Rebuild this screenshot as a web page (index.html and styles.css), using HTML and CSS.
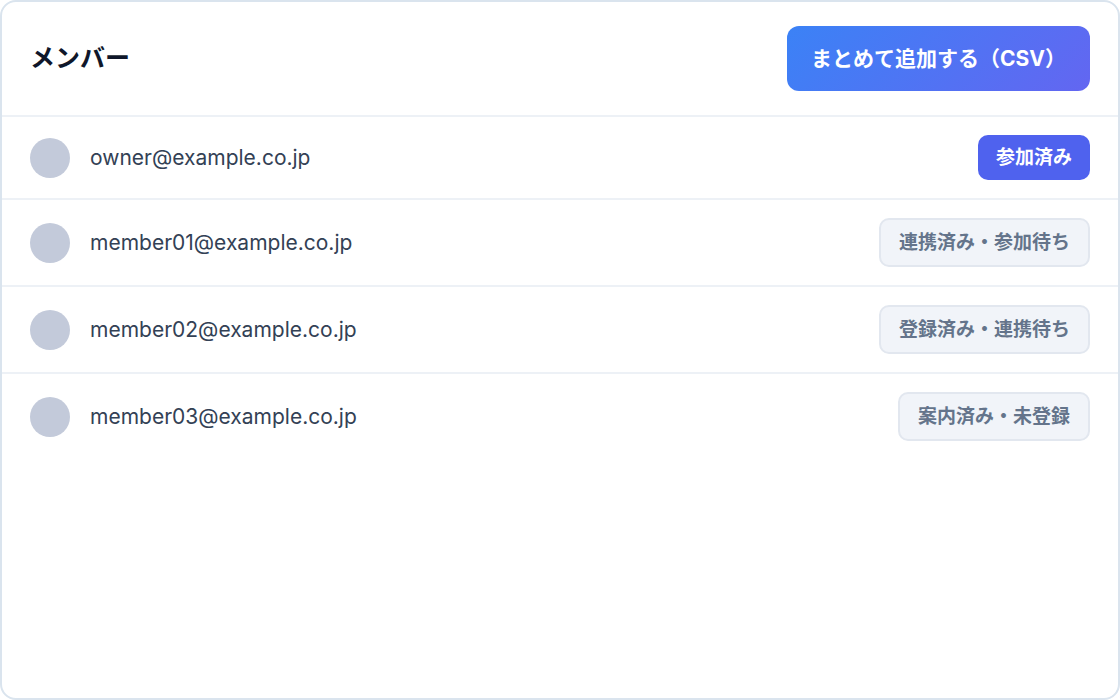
FILE: index.html
```
<!doctype html>
<html lang="ja">
    <head>
        <meta charset="utf-8">
        <meta name="viewport" content="width=device-width, initial-scale=1">
        <title>メンバー</title>
        <link rel="stylesheet" href="styles.css">
    </head>

    <body>
    <main class="panel">
        <header class="panel-header">
            <h1 class="panel-title">メンバー</h1>
            <button type="button" class="import-button">まとめて追加する（CSV）</button>
        </header>
        <ul class="members">
            <li class="member">
                <span class="avatar"></span>
                <span class="email">owner@example.co.jp</span>
                <span class="badge joined">参加済み</span>
            </li>
            <li class="member">
                <span class="avatar"></span>
                <span class="email">member01@example.co.jp</span>
                <span class="badge pending">連携済み・参加待ち</span>
            </li>
            <li class="member">
                <span class="avatar"></span>
                <span class="email">member02@example.co.jp</span>
                <span class="badge pending">登録済み・連携待ち</span>
            </li>
            <li class="member">
                <span class="avatar"></span>
                <span class="email">member03@example.co.jp</span>
                <span class="badge pending">案内済み・未登録</span>
            </li>
        </ul>
    </main>
    </body>
</html>
```
FILE: styles.css
```
* {
    box-sizing: border-box;
}
body {
    margin: 0;
    background: #ffffff;
    color: #334155;
    font-family: Inter, "Noto Sans CJK JP", sans-serif;
}
.panel {
    min-height: 100vh;
    border: 2px solid #dae4ee;
    border-radius: 16px;
    background: #ffffff;
}
.panel-header {
    display: flex;
    justify-content: space-between;
    align-items: center;
    gap: 20px;
    padding: 24px 28px;
}
.panel-title {
    margin: 0;
    font-size: 25px;
    line-height: 33px;
    font-weight: 700;
    color: #0f172a;
}
.import-button {
    padding: 16px 24px;
    border: none;
    border-radius: 12px;
    background: linear-gradient(135deg, #3b82f6, #6366f1);
    color: #ffffff;
    font-family: inherit;
    font-size: 21px;
    line-height: 33px;
    font-weight: 700;
    cursor: pointer;
}
.members {
    margin: 0;
    padding: 0;
    list-style: none;
}
.member {
    display: flex;
    align-items: center;
    gap: 20px;
    padding: 18px 28px;
    border-top: 2px solid #edf1f6;
}
.avatar {
    flex: none;
    width: 40px;
    height: 40px;
    border-radius: 50%;
    background: #c3cada;
}
.email {
    flex: 1;
    font-size: 21px;
    line-height: 29px;
}
.badge {
    padding: 8px 18px;
    border-radius: 10px;
    font-size: 19px;
    line-height: 29px;
    font-weight: 600;
}
.joined {
    background: #4f62ee;
    color: #ffffff;
}
.pending {
    border: 2px solid #e2e7ef;
    background: #f1f4f9;
    color: #64748b;
}
```
